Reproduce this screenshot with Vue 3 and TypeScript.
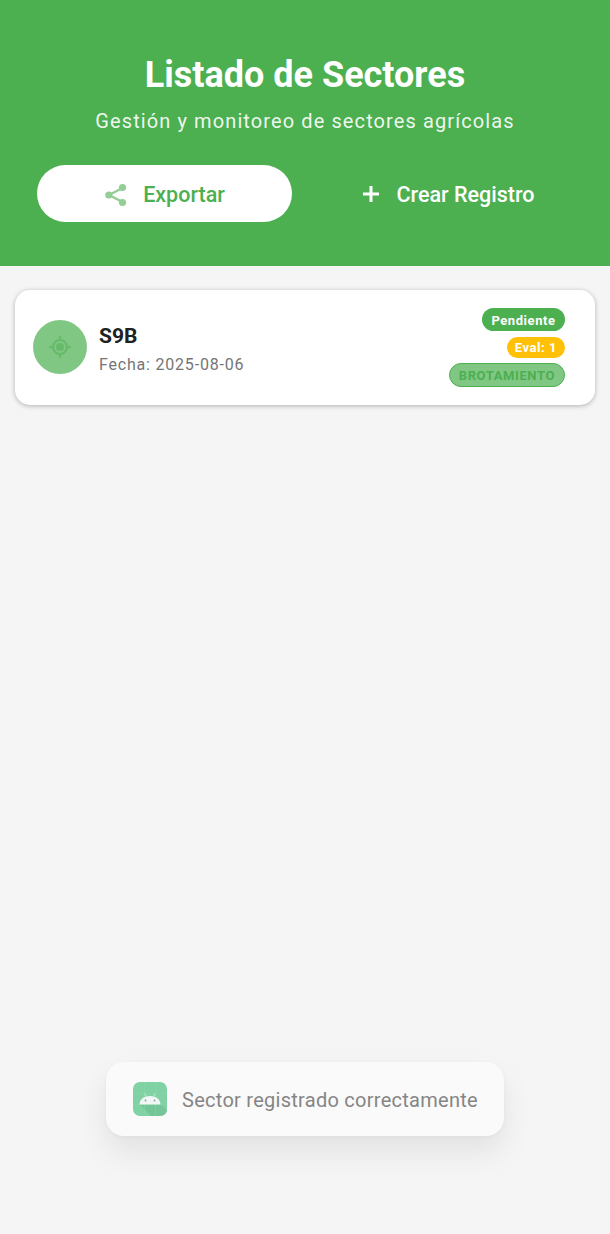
<script setup lang="ts">
const sector = { name: 'S9B', date: '2025-08-06', status: 'Pendiente', evals: 1, stage: 'BROTAMIENTO' }
</script>

<template>
  <div class="page">
    <header class="hero">
      <h1 class="title">Listado de Sectores</h1>
      <p class="subtitle">Gestión y monitoreo de sectores agrícolas</p>
      <div class="actions">
        <button class="btn btn-export" type="button">
          <svg class="share" viewBox="0 0 24 24" width="24" height="24" aria-hidden="true">
            <path d="M18.500 5 5 12l13.500 7" fill="none" stroke="#4caf50" stroke-width="2.400"/>
            <circle cx="18.500" cy="4.500" r="3.600" fill="#4caf50"/>
            <circle cx="4.800" cy="12" r="3.600" fill="#4caf50"/>
            <circle cx="18.500" cy="19.500" r="3.600" fill="#4caf50"/>
          </svg>
          <span>Exportar</span>
        </button>
        <button class="btn btn-create" type="button">
          <svg class="plus" viewBox="0 0 24 24" width="24" height="24" aria-hidden="true">
            <path fill="#fff" d="M13.500 10.500H20v3h-6.500V20h-3v-6.500H4v-3h6.500V4h3z"/>
          </svg>
          <span>Crear Registro</span>
        </button>
      </div>
    </header>

    <main class="list">
      <article class="card">
        <div class="avatar">
          <svg viewBox="0 0 24 24" width="24" height="24" aria-hidden="true">
            <circle cx="12" cy="12" r="7" fill="none" stroke="#66bb6a" stroke-width="2.200"/>
            <circle cx="12" cy="12" r="4" fill="#66bb6a"/>
            <path d="M12 1v4M12 19v4M1 12h4M19 12h4" stroke="#66bb6a" stroke-width="2"/>
          </svg>
        </div>
        <div class="info">
          <div class="name">{{ sector.name }}</div>
          <div class="date">Fecha: {{ sector.date }}</div>
        </div>
        <div class="badges">
          <span class="badge badge-green">{{ sector.status }}</span>
          <span class="badge badge-amber">Eval: {{ sector.evals }}</span>
          <span class="badge badge-stage">{{ sector.stage }}</span>
        </div>
      </article>
    </main>

    <div class="toast">
      <svg class="toast-icon" viewBox="0 0 34 34" width="34" height="34" aria-hidden="true">
        <rect width="34" height="34" rx="7" fill="#80d1a3"/>
        <path d="M6.500 22 H27.500 L34 28.500 V27 Q34 34 27 34 H18 Z" fill="#6fc193" opacity="0.7"/>
        <path d="M0 11.500h34M0 22.500h34M11.500 0v34M22.500 0v34" stroke="#8ad6ab" stroke-width="0.500"/>
        <path fill="#f2f6f4" d="M6.500 22.500c.3-5 4-8.500 10.500-8.500s10.200 3.500 10.500 8.500z"/>
        <circle cx="12.500" cy="18.500" r=".9" fill="#8aa597"/>
        <circle cx="21.500" cy="18.500" r=".9" fill="#8aa597"/>
        <path d="M11.500 11.500l2 3.200M22.500 11.500l-2 3.200" stroke="#dcefe5" stroke-width="0.800" fill="none"/>
      </svg>
      <span class="toast-text">Sector registrado correctamente</span>
    </div>
  </div>
</template>

<style>
html, body { margin: 0; background: #f5f5f5; }
</style>

<style scoped>
.page {
  position: relative;
  width: 610px;
  height: 1234px;
  overflow: hidden;
  background: #f5f5f5;
  font-family: Roboto, "Liberation Sans", sans-serif;
}
.hero {
  box-sizing: border-box;
  height: 266px;
  padding-top: 52px;
  background: #4caf50;
  color: #fff;
  text-align: center;
}
.title {
  margin: 0;
  font-size: 36px;
  line-height: 46px;
  font-weight: 700;
}
.subtitle {
  margin: 10px 0 0;
  font-size: 20px;
  line-height: 26px;
  letter-spacing: 1.100px;
  color: rgba(255, 255, 255, 0.92);
}
.actions {
  display: flex;
  gap: 31px;
  margin-top: 31px;
  padding: 0 37px;
}
.btn {
  display: flex;
  align-items: center;
  justify-content: center;
  gap: 15px;
  height: 57px;
  padding: 2px 0 0;
  border: 0;
  border-radius: 29px;
  font-family: inherit;
  font-size: 21.500px;
  font-weight: 500;
}
.btn-export {
  width: 255px;
  background: #fff;
  color: #4caf50;
}
.share { opacity: 0.6; }
.plus { margin-top: -2px; margin-left: -1px; margin-right: 1px; }
.btn-create {
  width: 248px;
  gap: 13px;
  background: transparent;
  color: #fff;
}
.list { padding: 24px 15px 0; }
.card {
  display: flex;
  align-items: center;
  box-sizing: border-box;
  height: 115px;
  padding: 0 30px 2px 18px;
  background: #fff;
  border-radius: 15px;
  box-shadow: 0 1px 5px rgba(0, 0, 0, 0.28);
}
.avatar {
  display: flex;
  align-items: center;
  justify-content: center;
  flex: none;
  width: 54px;
  height: 54px;
  border-radius: 50%;
  background: #81c784;
}
.info { flex: 1; margin-left: 12px; padding-top: 6px; }
.name {
  font-size: 21px;
  line-height: 26px;
  font-weight: 700;
  color: #212121;
}
.date {
  margin-top: 5px;
  font-size: 16px;
  line-height: 22px;
  letter-spacing: 0.800px;
  color: #757575;
}
.badges {
  display: flex;
  flex-direction: column;
  align-items: flex-end;
  margin-top: 2px;
}
.badge {
  box-sizing: border-box;
  height: 24px;
  padding: 0 9px;
  border-radius: 12px;
  font-size: 13px;
  line-height: 24px;
  font-weight: 700;
  letter-spacing: 0.550px;
  color: #fff;
}
.badge-green { height: 23px; line-height: 25px; padding: 0 9.500px; background: #4caf50; }
.badge-amber {
  height: 21px;
  margin-top: 6px;
  padding: 0 8px;
  line-height: 21px;
  background: #ffc107;
}
.badge-stage {
  margin-top: 5px;
  line-height: 23px;
  background: #81c784;
  border: 1px solid #4caf50;
  color: #4caf50;
  letter-spacing: 0.600px;
}
.toast {
  position: absolute;
  left: 106px;
  top: 1062px;
  box-sizing: border-box;
  width: 398px;
  height: 74px;
  display: flex;
  align-items: center;
  gap: 15px;
  padding-left: 27px;
  background: #fafafa;
  border-radius: 18px;
  box-shadow: 0 16px 30px rgba(0, 0, 0, 0.08), 0 1px 4px rgba(0, 0, 0, 0.04);
}
.toast-icon { flex: none; }
.toast-text {
  padding-top: 2px;
  font-size: 20px;
  letter-spacing: 0.270px;
  color: #858585;
  white-space: nowrap;
}
</style>
